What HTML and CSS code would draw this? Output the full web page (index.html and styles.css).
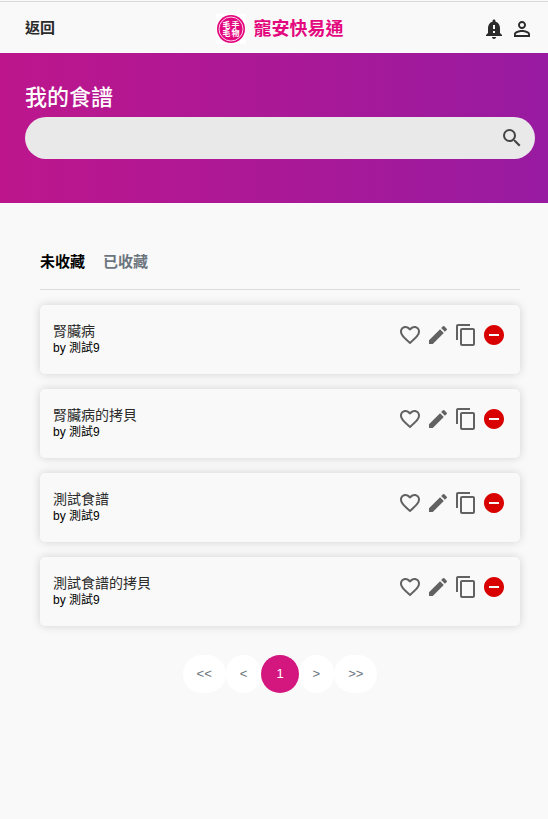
FILE: index.html
```
<!DOCTYPE html>
<html lang="zh-Hant">
<head>
    <meta charset="UTF-8">
    <meta name="viewport" content="width=device-width, initial-scale=1.0">
    <title>寵安快易通</title>
    <link rel="stylesheet" href="styles.css">
</head>
<body>
    <!-- shared icons -->
    <svg class="sprite" aria-hidden="true">
        <symbol id="heart" viewBox="0 0 24 24"><path d="M16.5 3c-1.74 0-3.41.81-4.5 2.09C10.91 3.81 9.24 3 7.5 3 4.42 3 2 5.42 2 8.5c0 3.78 3.4 6.86 8.55 11.54L12 21.35l1.45-1.32C18.6 15.36 22 12.28 22 8.5 22 5.42 19.58 3 16.5 3zm-4.4 15.55-.1.1-.1-.1C7.14 14.24 4 11.39 4 8.5 4 6.5 5.5 5 7.5 5c1.54 0 3.04.99 3.57 2.36h1.87C13.46 5.99 14.96 5 16.5 5c2 0 3.5 1.5 3.5 3.5 0 2.89-3.14 5.74-7.9 10.05z"/></symbol>
        <symbol id="edit" viewBox="0 0 24 24"><path d="M3 17.25V21h3.75L17.81 9.94l-3.75-3.75L3 17.25zM20.71 7.04a1 1 0 0 0 0-1.41l-2.34-2.34a1 1 0 0 0-1.41 0l-1.83 1.83 3.75 3.75 1.83-1.83z"/></symbol>
        <symbol id="copy" viewBox="0 0 24 24"><path d="M16 1H4c-1.1 0-2 .9-2 2v14h2V3h12V1zm3 4H8c-1.1 0-2 .9-2 2v14c0 1.1.9 2 2 2h11c1.1 0 2-.9 2-2V7c0-1.1-.9-2-2-2zm0 16H8V7h11v14z"/></symbol>
        <symbol id="remove" viewBox="0 0 24 24"><path d="M12 2C6.48 2 2 6.48 2 12s4.48 10 10 10 10-4.48 10-10S17.52 2 12 2zm5 11H7v-2h10v2z"/></symbol>
    </svg>

    <header class="header">
        <a class="back" href="#">返回</a>
        <a class="brand" href="#">
            <svg class="logo" viewBox="0 0 30 30" aria-hidden="true">
                <rect width="30" height="30" fill="#fff"/>
                <circle cx="15" cy="15" r="14" fill="#e4087e"/>
                <circle cx="15" cy="15" r="12" fill="none" stroke="#fff" stroke-width=".8"/>
                <text x="10.5" y="14" text-anchor="middle">毛</text>
                <text x="19.5" y="14" text-anchor="middle">手</text>
                <text x="10.5" y="22" text-anchor="middle">毛</text>
                <text x="19.5" y="22" text-anchor="middle">物</text>
            </svg>
            <span>寵安快易通</span>
        </a>
        <div class="header-icons">
            <button class="icon-button" aria-label="通知">
                <svg viewBox="0 0 24 24"><path d="M18 16v-5c0-3.07-1.64-5.64-4.5-6.32V4c0-.83-.67-1.5-1.5-1.5s-1.5.67-1.5 1.5v.68C7.63 5.36 6 7.92 6 11v5l-2 2v1h16v-1l-2-2zm-5 0h-2v-2h2v2zm0-4h-2V8h2v4zm-1 10c1.1 0 2-.9 2-2h-4c0 1.1.89 2 2 2z"/></svg>
            </button>
            <button class="icon-button" aria-label="會員">
                <svg viewBox="0 0 24 24"><path d="M12 5.9a2.1 2.1 0 1 1 0 4.2 2.1 2.1 0 0 1 0-4.2m0 9c2.97 0 6.1 1.46 6.1 2.1v1.1H5.9V17c0-.64 3.13-2.1 6.1-2.1M12 4C9.79 4 8 5.79 8 8s1.79 4 4 4 4-1.79 4-4-1.79-4-4-4zm0 9c-2.67 0-8 1.34-8 4v3h16v-3c0-2.66-5.33-4-8-4z"/></svg>
            </button>
        </div>
    </header>

    <section class="hero">
        <h1>我的食譜</h1>
        <form class="search">
            <input type="text" aria-label="搜尋食譜">
            <button class="icon-button" type="button" aria-label="搜尋">
                <svg viewBox="0 0 24 24"><path d="M15.5 14h-.79l-.28-.27A6.47 6.47 0 0 0 16 9.5 6.5 6.5 0 1 0 9.5 16c1.61 0 3.09-.59 4.23-1.57l.27.28v.79l5 4.99L20.49 19l-4.99-5zm-6 0C7.01 14 5 11.99 5 9.5S7.01 5 9.5 5 14 7.01 14 9.5 11.99 14 9.5 14z"/></svg>
            </button>
        </form>
    </section>

    <main class="container">
        <nav class="tabs">
            <a class="active" href="#">未收藏</a>
            <a href="#">已收藏</a>
        </nav>

        <div class="recipes">
            <article class="recipe">
                <div class="recipe-text">
                    <h2>腎臟病</h2>
                    <p>by 測試9</p>
                </div>
                <div class="actions">
                    <button class="icon-button" aria-label="收藏"><svg><use href="#heart"/></svg></button>
                    <button class="icon-button" aria-label="編輯"><svg><use href="#edit"/></svg></button>
                    <button class="icon-button" aria-label="拷貝"><svg><use href="#copy"/></svg></button>
                    <button class="icon-button delete" aria-label="刪除"><svg><use href="#remove"/></svg></button>
                </div>
            </article>
            <article class="recipe">
                <div class="recipe-text">
                    <h2>腎臟病的拷貝</h2>
                    <p>by 測試9</p>
                </div>
                <div class="actions">
                    <button class="icon-button" aria-label="收藏"><svg><use href="#heart"/></svg></button>
                    <button class="icon-button" aria-label="編輯"><svg><use href="#edit"/></svg></button>
                    <button class="icon-button" aria-label="拷貝"><svg><use href="#copy"/></svg></button>
                    <button class="icon-button delete" aria-label="刪除"><svg><use href="#remove"/></svg></button>
                </div>
            </article>
            <article class="recipe">
                <div class="recipe-text">
                    <h2>測試食譜</h2>
                    <p>by 測試9</p>
                </div>
                <div class="actions">
                    <button class="icon-button" aria-label="收藏"><svg><use href="#heart"/></svg></button>
                    <button class="icon-button" aria-label="編輯"><svg><use href="#edit"/></svg></button>
                    <button class="icon-button" aria-label="拷貝"><svg><use href="#copy"/></svg></button>
                    <button class="icon-button delete" aria-label="刪除"><svg><use href="#remove"/></svg></button>
                </div>
            </article>
            <article class="recipe">
                <div class="recipe-text">
                    <h2>測試食譜的拷貝</h2>
                    <p>by 測試9</p>
                </div>
                <div class="actions">
                    <button class="icon-button" aria-label="收藏"><svg><use href="#heart"/></svg></button>
                    <button class="icon-button" aria-label="編輯"><svg><use href="#edit"/></svg></button>
                    <button class="icon-button" aria-label="拷貝"><svg><use href="#copy"/></svg></button>
                    <button class="icon-button delete" aria-label="刪除"><svg><use href="#remove"/></svg></button>
                </div>
            </article>
        </div>

        <nav class="pagination" aria-label="分頁">
            <a href="#">&lt;&lt;</a>
            <a href="#">&lt;</a>
            <a class="current" href="#">1</a>
            <a href="#">&gt;</a>
            <a href="#">&gt;&gt;</a>
        </nav>
    </main>
</body>
</html>
```
FILE: styles.css
```
* {
    box-sizing: border-box;
}

body {
    margin: 0;
    padding-top: 1px;
    background-color: #f9f9f9;
    color: #2b2b2b;
    font-family: "Liberation Sans", "Noto Sans CJK TC", sans-serif;
}

a {
    color: inherit;
    text-decoration: none;
}

h1, h2, p {
    margin: 0;
    font-weight: normal;
}

.sprite {
    display: none;
}

.icon-button {
    width: 24px;
    height: 24px;
    padding: 0;
    border: none;
    background: none;
    color: inherit;
    cursor: pointer;
}

.icon-button svg {
    display: block;
    width: 100%;
    height: 100%;
    fill: currentColor;
}

.header {
    display: grid;
    grid-template-columns: 1fr auto 1fr;
    align-items: center;
    height: 52px;
    padding: 2px 14px 0 25px;
    border-top: 1px solid #d9d9d9;
}

.back {
    padding-bottom: 4px;
    font-size: 15px;
    font-weight: bold;
}

.brand {
    display: flex;
    align-items: center;
    gap: 8px;
    color: #e4087e;
    font-size: 18px;
    font-weight: bold;
    line-height: 24px;
}

.logo {
    width: 30px;
    height: 30px;
}

.logo text {
    fill: #fff;
    font-size: 8px;
    font-weight: bold;
}

.header-icons {
    display: flex;
    justify-content: flex-end;
    gap: 4px;
}

.hero {
    height: 150px;
    padding: 29px 13px 0 25px;
    background: linear-gradient(to right, #bd168c, #981ba1);
}

.hero h1 {
    color: #fff;
    font-size: 22px;
    font-weight: 500;
    line-height: 32px;
}

.search {
    display: flex;
    align-items: center;
    height: 42px;
    margin-top: 3px;
    padding: 0 11px 0 20px;
    border-radius: 21px;
    background-color: #e9e9e9;
    color: #444;
}

.search input {
    flex: 1;
    min-width: 0;
    height: 100%;
    border: none;
    outline: none;
    background: none;
    font: inherit;
}

.container {
    padding: 44px 28px 0 40px;
}

.tabs {
    display: flex;
    gap: 18px;
    height: 43px;
    border-bottom: 1px solid #dcdcdc;
    color: #6c757d;
    font-size: 15px;
    font-weight: bold;
    line-height: 30px;
}

.tabs .active {
    color: #000;
}

.recipes {
    display: grid;
    gap: 15px;
    margin-top: 15px;
}

.recipe {
    display: flex;
    justify-content: space-between;
    height: 69px;
    padding: 18px 14px 0 13px;
    border-radius: 5px;
    box-shadow: 0 0 10px rgba(0, 0, 0, 0.16);
}

.recipe h2 {
    font-size: 14px;
    line-height: 17px;
}

.recipe p {
    color: #000;
    font-size: 12px;
    line-height: 17px;
}

.actions {
    display: flex;
    gap: 4px;
    color: #626262;
}

.delete {
    color: #d90000;
}

.pagination {
    display: flex;
    justify-content: center;
    margin-top: 29px;
    color: #6c757d;
    font-size: 13px;
    line-height: 38px;
}

.pagination a {
    padding: 0 14px;
    border-radius: 19px;
    background-color: #fff;
}

.pagination .current {
    padding: 0 15px;
    background-color: #d3177f;
    color: #fff;
}
```
